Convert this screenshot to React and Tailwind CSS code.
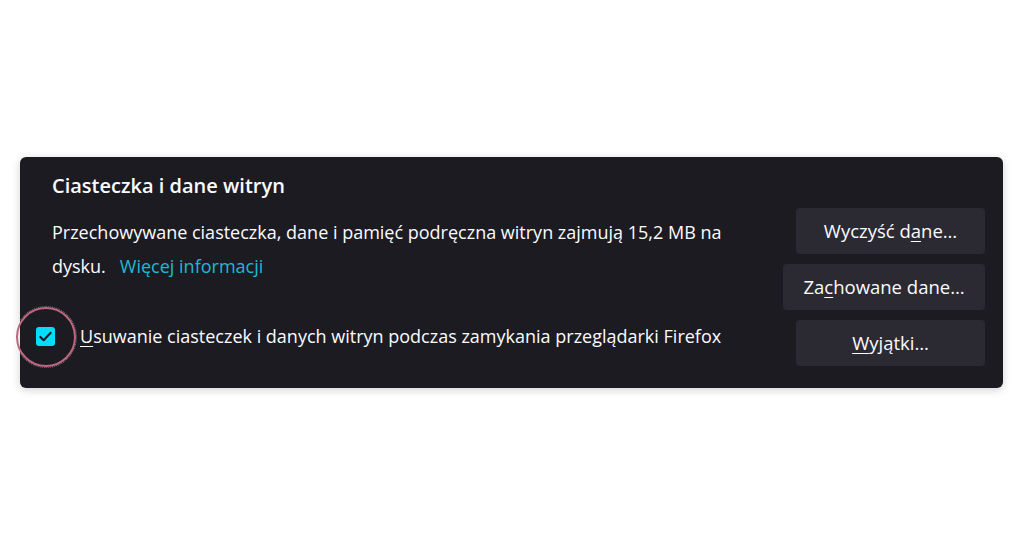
import React from "react";

const Underlined = ({ before, letter, after }) => (
  <>
    {before}
    <span className="underline underline-offset-[3px]">{letter}</span>
    {after}
  </>
);

const PrefButton = ({ children, className = "" }) => (
  <button
    type="button"
    className={`h-[46px] rounded-[4px] bg-[#2b2a33] text-[18.5px] text-[#fbfbfe] ${className}`}
  >
    {children}
  </button>
);

const App = () => {
  return (
    <div
      className="min-h-[546px] w-full bg-white pt-[157px]"
      style={{ fontFamily: '"Open Sans", "Noto Sans", sans-serif' }}
    >
      <section className="relative ml-[20px] w-[983px] rounded-[6px] bg-[#1c1b22] pb-[22px] pl-[32px] pr-[18px] pt-[15px] text-[#fbfbfe] shadow-[0_2px_8px_rgba(0,0,0,0.18)]">
        <h2 className="text-[20px] font-semibold leading-[28px]">Ciasteczka i dane witryn</h2>

        <div className="mt-[8px] flex">
          <div className="flex-1 pt-[7px]">
            <div className="text-[18px] leading-[34px]">
              <p>Przechowywane ciasteczka, dane i pamięć podręczna witryn zajmują 15,2 MB na</p>
              <p className="flex">
                <span>dysku.</span>
                <a href="#/" className="ml-[14px] text-[#1cb8d8]">
                  Więcej informacji
                </a>
              </p>
            </div>

            <label className="ml-[-16px] mt-[36px] flex h-[34px] items-center">
              <span className="flex h-[19px] w-[19px] shrink-0 items-center justify-center rounded-[3px] bg-[#00ddff]">
                <svg width="15" height="15" viewBox="0 0 16 16" fill="none">
                  <path
                    d="M2.5 8.5l3.5 3.5 7.5-8"
                    stroke="#1c1b22"
                    strokeWidth="2.2"
                    strokeLinecap="round"
                    strokeLinejoin="round"
                  />
                </svg>
              </span>
              <span className="ml-[25px] whitespace-nowrap text-[18px]">
                <Underlined before="" letter="U" after="suwanie ciasteczek i danych witryn podczas zamykania przeglądarki Firefox" />
              </span>
            </label>
          </div>

          <div className="flex flex-col items-end gap-[10px]">
            <PrefButton className="w-[189px]">
              <Underlined before="Wyczyść d" letter="a" after="ne…" />
            </PrefButton>
            <PrefButton className="w-[202px]">
              <Underlined before="Za" letter="c" after="howane dane…" />
            </PrefButton>
            <PrefButton className="w-[189px]">
              <Underlined before="" letter="W" after="yjątki…" />
            </PrefButton>
          </div>
        </div>

        {/* highlight ring around the checkbox */}
        <span className="absolute left-[-4px] top-[150px] h-[60px] w-[60px] rounded-full border-2 border-[#c0667f] outline outline-1 outline-dotted outline-white/40" />
      </section>
    </div>
  );
};

export default App;
